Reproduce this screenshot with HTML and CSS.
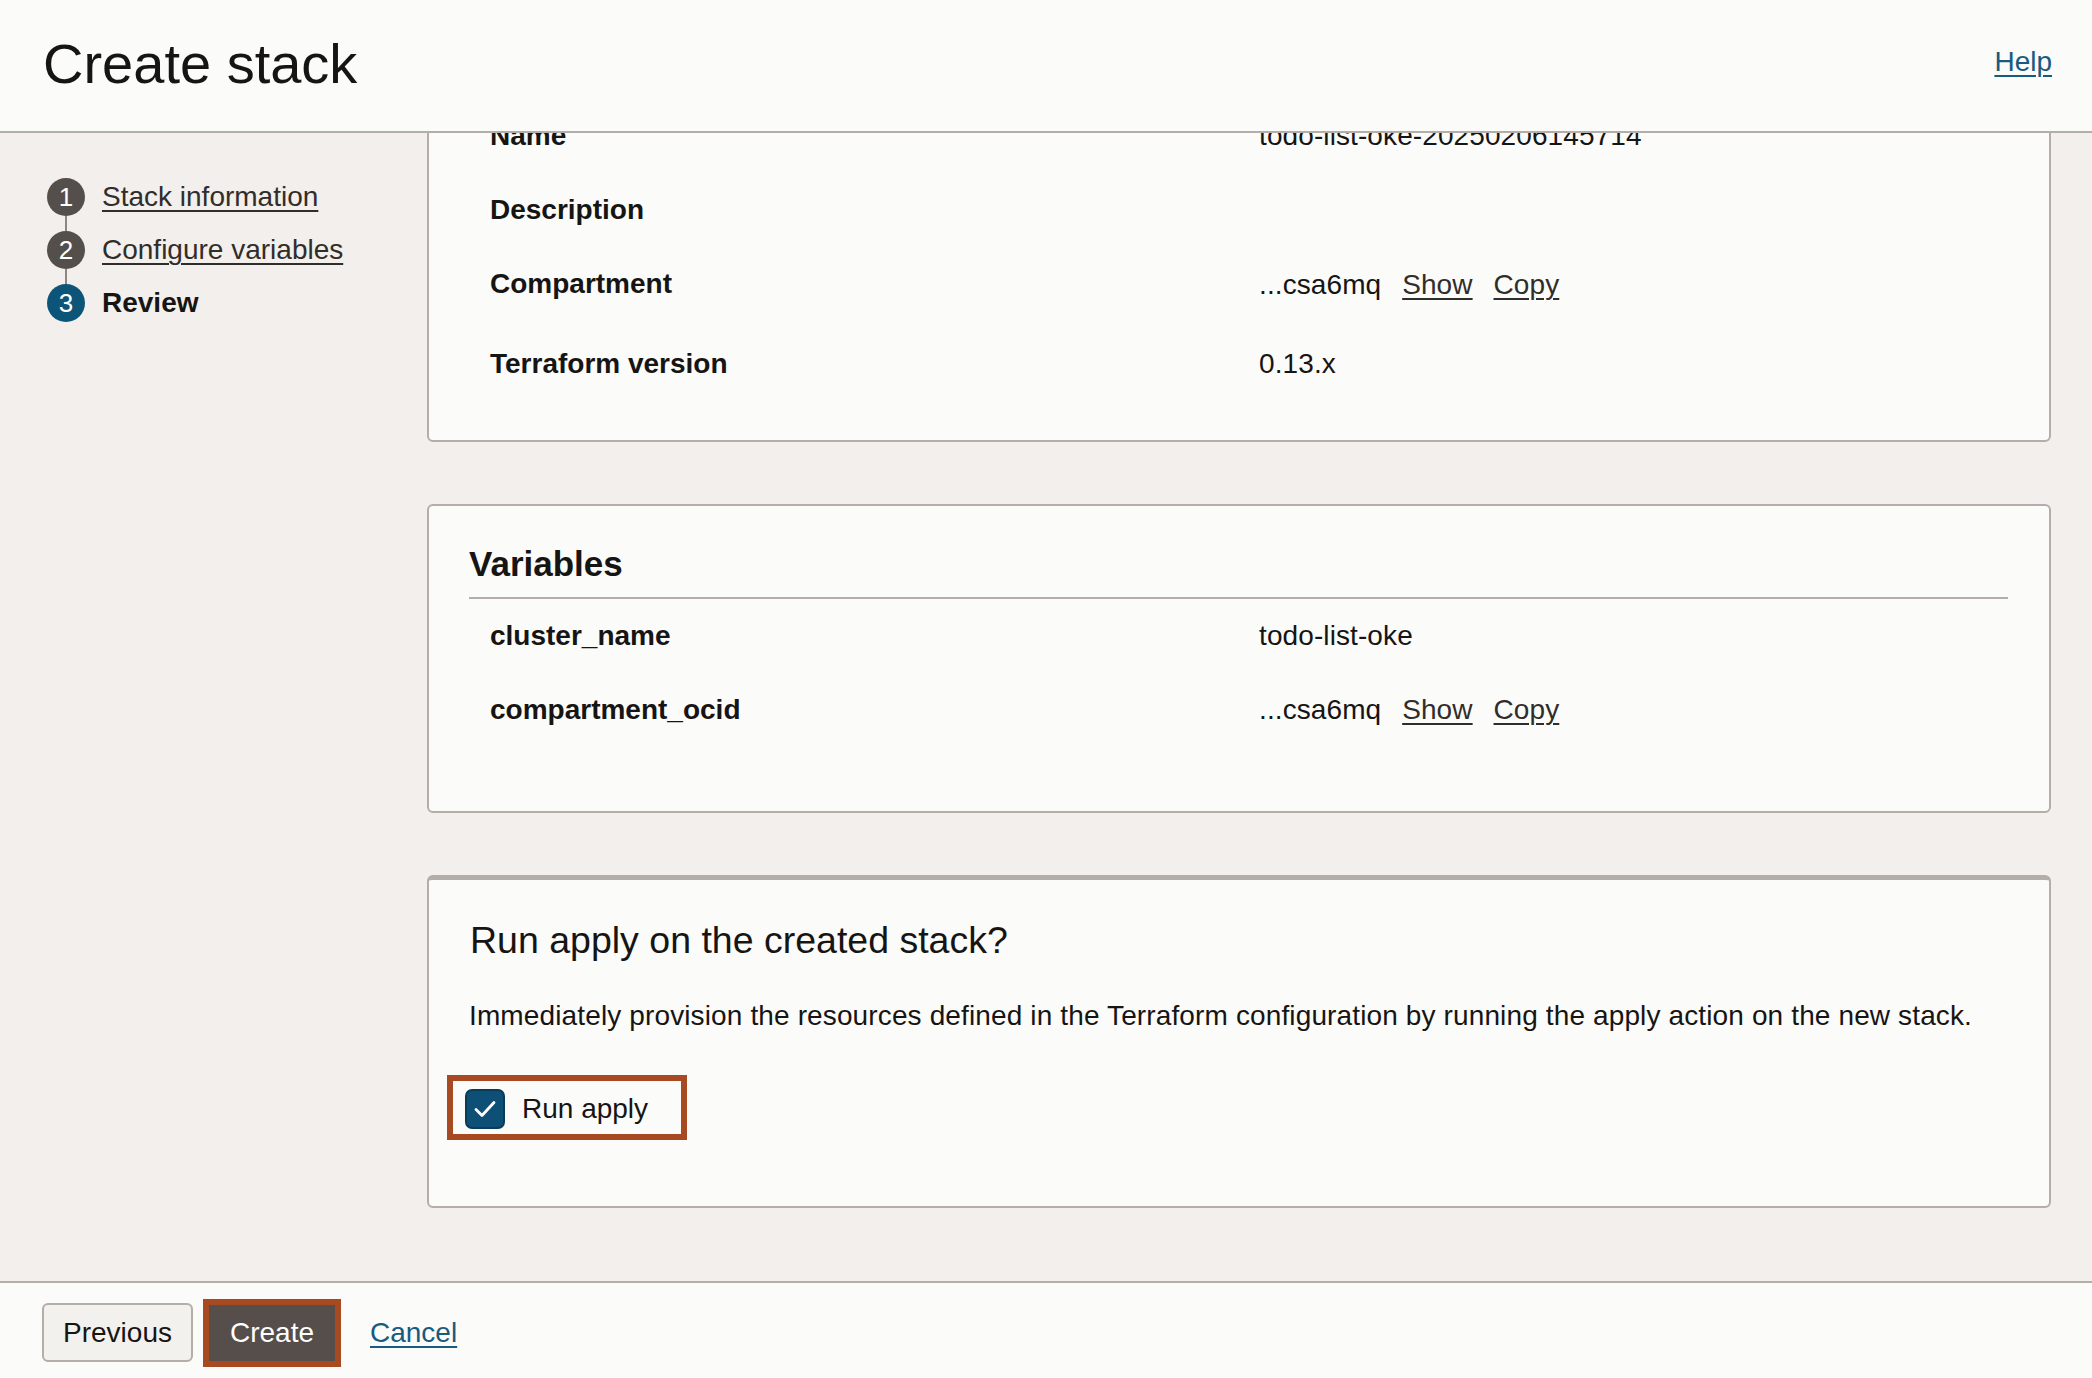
FILE: index.html
```html
<!DOCTYPE html>
<html lang="en">
<head>
<meta charset="utf-8">
<title>Create stack</title>
<link rel="stylesheet" href="styles.css">
</head>
<body>
<div class="page">
  <header class="top">
    <h1 class="title">Create stack</h1>
    <a class="help" href="#">Help</a>
  </header>

  <div class="middle">
    <nav class="steps">
      <div class="step">
        <span class="num done">1</span>
        <a class="step-link" href="#">Stack information</a>
      </div>
      <div class="connector"></div>
      <div class="step">
        <span class="num done">2</span>
        <a class="step-link" href="#">Configure variables</a>
      </div>
      <div class="connector"></div>
      <div class="step">
        <span class="num current">3</span>
        <span class="step-current">Review</span>
      </div>
    </nav>

    <main class="content">
      <section class="card card-first">
        <div class="card-head card-head-hidden"></div>
        <div class="props">
          <div class="row"><div class="lbl">Name</div><div class="val">todo-list-oke-20250206145714</div></div>
          <div class="row"><div class="lbl">Description</div><div class="val"></div></div>
          <div class="row tall"><div class="lbl">Compartment</div><div class="val val-low">...csa6mq <a class="act" href="#">Show</a> <a class="act" href="#">Copy</a></div></div>
          <div class="row"><div class="lbl">Terraform version</div><div class="val">0.13.x</div></div>
        </div>
      </section>

      <section class="card card-vars">
        <h2 class="card-head">Variables</h2>
        <div class="props">
          <div class="row"><div class="lbl">cluster_name</div><div class="val">todo-list-oke</div></div>
          <div class="row tall"><div class="lbl">compartment_ocid</div><div class="val">...csa6mq <a class="act" href="#">Show</a> <a class="act" href="#">Copy</a></div></div>
        </div>
      </section>

      <section class="card card-apply">
        <h2 class="apply-title">Run apply on the created stack?</h2>
        <p class="apply-desc">Immediately provision the resources defined in the Terraform configuration by running the apply action on the new stack.</p>
        <label class="run-apply">
          <span class="checkbox">
            <svg width="28" height="28" viewBox="0 0 28 28" aria-hidden="true"><path d="M5 14.5 L11 20.5 L23 7.5" fill="none" stroke="#ffffff" stroke-width="2.8" stroke-linecap="round" stroke-linejoin="round"/></svg>
          </span>
          <span class="run-label">Run apply</span>
        </label>
      </section>
    </main>
  </div>

  <footer class="bottom">
    <button class="btn btn-prev" type="button">Previous</button>
    <button class="btn btn-create" type="button">Create</button>
    <a class="cancel" href="#">Cancel</a>
  </footer>
</div>
</body>
</html>
```

FILE: styles.css
```css
* { box-sizing: border-box; }

html, body {
  margin: 0;
  padding: 0;
}

body {
  font-family: "Liberation Sans", Arial, sans-serif;
  color: #161513;
  background: #f2efec;
  font-size: 28px;
}

.page {
  height: 100vh;
  display: flex;
  flex-direction: column;
  overflow: hidden;
}

/* Header */
.top {
  flex: 0 0 133px;
  background: #fbfbfa;
  border-bottom: 2px solid #b4ada8;
  display: flex;
  justify-content: space-between;
  align-items: flex-start;
  padding: 36px 40px 0 43px;
}

.title {
  margin: 0;
  font-size: 56px;
  line-height: 56px;
  font-weight: 400;
}

.help {
  margin-top: 12px;
  line-height: 28px;
  font-size: 28px;
  color: #185a80;
  text-decoration: underline;
  text-underline-offset: 4px;
  text-decoration-thickness: 2px;
}

/* Middle */
.middle {
  flex: 1 1 auto;
  display: flex;
  overflow: hidden;
  min-height: 0;
}

.steps {
  flex: 0 0 427px;
  padding: 45px 0 0 47px;
  display: flex;
  flex-direction: column;
}

.step {
  display: flex;
  align-items: center;
  height: 38px;
  gap: 17px;
}

.num {
  flex: 0 0 38px;
  width: 38px;
  height: 38px;
  border-radius: 50%;
  color: #ffffff;
  font-size: 26px;
  line-height: 38px;
  text-align: center;
}

.num.done { background: #554f4b; }
.num.current { background: #0d5479; }

.connector {
  width: 2px;
  height: 15px;
  margin-left: 18px;
  background: #8d8681;
}

.step-link {
  color: #312d2a;
  font-size: 28px;
  line-height: 38px;
  text-decoration: underline;
  text-underline-offset: 4px;
  text-decoration-thickness: 2px;
  white-space: nowrap;
}

.step-current {
  font-weight: 700;
  font-size: 28px;
  line-height: 38px;
}

/* Content */
.content {
  flex: 1 1 auto;
  padding-right: 41px;
  margin-top: -129px;
  display: flex;
  flex-direction: column;
  gap: 62px;
}

.card {
  background: #fbfbfa;
  border: 2px solid #b4ada8;
  border-radius: 6px;
  padding: 38px 41px 0 40px;
}

.card-first { padding-bottom: 39px; }
.card-vars { padding-bottom: 58px; }

.card-head {
  margin: 0;
  font-size: 35px;
  line-height: 40px;
  font-weight: 700;
  padding-bottom: 13px;
  border-bottom: 2px solid #b4ada8;
}

.card-head-hidden {
  height: 55px;
}

.props {
  padding-left: 21px;
}

.row {
  display: grid;
  grid-template-columns: 769px 1fr;
  height: 74px;
  line-height: 74px;
  font-size: 28px;
}

.row.tall { height: 80px; }

.lbl { font-weight: 700; white-space: nowrap; }

.val { white-space: nowrap; letter-spacing: 0.1px; }
.val-low { padding-top: 1px; }

.act {
  color: #312d2a;
  text-decoration: underline;
  text-underline-offset: 4px;
  text-decoration-thickness: 2px;
  margin-left: 13px;
}

/* Apply card */
.card-apply {
  border-top-width: 5px;
  padding-top: 40px;
  padding-bottom: 66px;
}

.apply-title {
  margin: 0;
  font-size: 37.5px;
  line-height: 40px;
  font-weight: 400;
  padding-left: 1px;
}

.apply-desc {
  margin: 38px 0 0 0;
  font-size: 28px;
  line-height: 36px;
  letter-spacing: 0.13px;
}

.run-apply {
  margin-top: 41px;
  margin-left: -22px;
  width: 240px;
  height: 65px;
  border: 6px solid #a84a21;
  display: flex;
  align-items: center;
  padding: 2px 0 0 12px;
  gap: 17px;
}

.checkbox {
  width: 40px;
  height: 40px;
  border-radius: 7px;
  background: #0e5075;
  border: 2px solid #0a3b58;
  display: flex;
  align-items: center;
  justify-content: center;
}

.run-label {
  font-size: 28px;
  line-height: 36px;
}

/* Footer */
.bottom {
  flex: 0 0 97px;
  background: #fbfbfa;
  border-top: 2px solid #b4ada8;
  display: flex;
  align-items: center;
  padding: 4px 0 0 42px;
}

.btn {
  font-family: "Liberation Sans", Arial, sans-serif;
  font-size: 28px;
  cursor: pointer;
}

.btn-prev {
  height: 59px;
  padding: 0 19px;
  width: 151px;
  background: #f3f1ee;
  border: 2px solid #b4ada8;
  border-radius: 6px;
  color: #161513;
}

.btn-create {
  margin-left: 16px;
  width: 126px;
  height: 56px;
  padding: 0;
  background: #554e4a;
  border: none;
  color: #ffffff;
  outline: 6px solid #a84a21;
}

.cancel {
  margin-left: 35px;
  font-size: 28px;
  color: #185a80;
  text-decoration: underline;
  text-underline-offset: 4px;
  text-decoration-thickness: 2px;
}
```
